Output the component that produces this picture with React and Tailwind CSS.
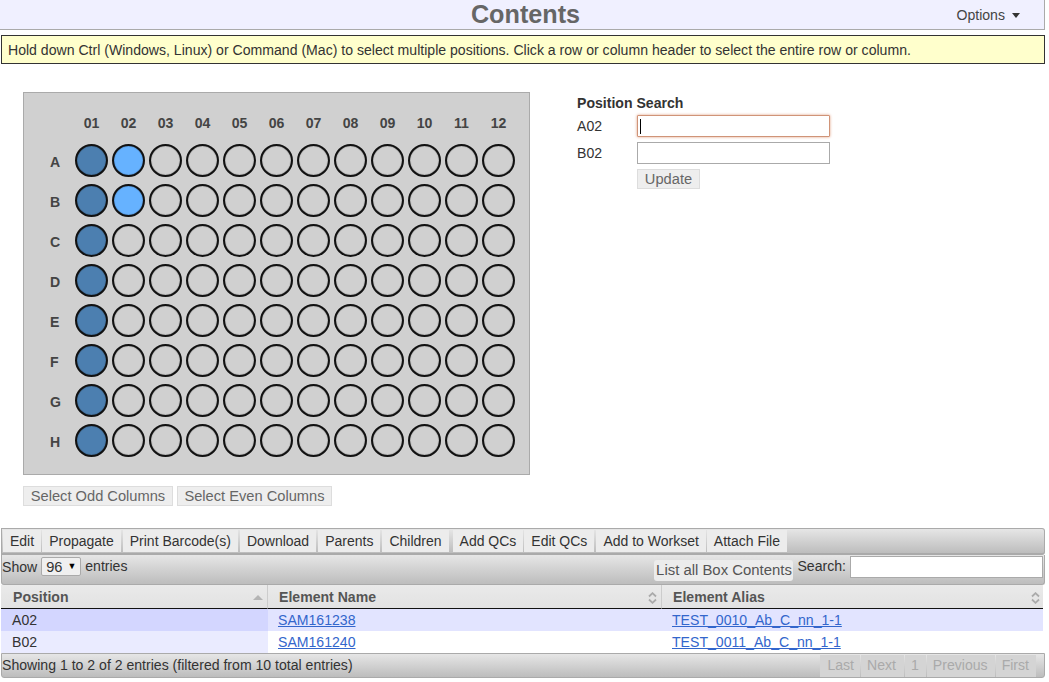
const columns = ["01", "02", "03", "04", "05", "06", "07", "08", "09", "10", "11", "12"];
const rows = ["A", "B", "C", "D", "E", "F", "G", "H"];
const tools = [
  { label: "Edit", cls: "" },
  { label: "Propagate", cls: "mr-[1px]" },
  { label: "Print Barcode(s)", cls: "mr-[1px]" },
  { label: "Download", cls: "mr-[1px]" },
  { label: "Parents", cls: "mr-[1px]" },
  { label: "Children", cls: "mr-[3px]" },
  { label: "Add QCs", cls: "" },
  { label: "Edit QCs", cls: "mr-[1px]" },
  { label: "Add to Workset", cls: "" },
  { label: "Attach File", cls: "" },
];
const pages = [
  { label: "Last", cls: "pl-[7px] pr-[6px]" },
  { label: "Next", cls: "pl-[6px] pr-[8px]" },
  { label: "1", cls: "pl-[6px] pr-[7px]" },
  { label: "Previous", cls: "pl-[6px] pr-[7px]" },
  { label: "First", cls: "pl-[6px] pr-[7px]" },
];

function Well({ row, col }) {
  const full = col === "01";
  const picked = col === "02" && (row === "A" || row === "B");
  return (
    <div className="h-10 flex items-center justify-center">
      <div
        className={
          "w-[33px] h-[33px] rounded-full border-2 border-[#111] shadow-[inset_0_0_1px_#111] " +
          (full ? "bg-[#4c7fb0]" : picked ? "bg-[#66b2ff]" : "bg-[#d0d0d0]")
        }
      />
    </div>
  );
}

function SortArrows({ only }) {
  if (only) {
    return <span className="ml-auto w-0 h-0 border-x-[5px] border-x-transparent border-b-[5px] border-b-[#b4b4b4]" />;
  }
  return (
    <svg width="9" height="12" viewBox="0 0 9 12" fill="none" stroke="#aaa" strokeWidth="1.8" className="ml-auto">
      <path d="M1 4.5 L4.5 1.2 L8 4.5" />
      <path d="M1 7.5 L4.5 10.8 L8 7.5" />
    </svg>
  );
}

export default function App() {
  return (
    <div className="w-[1049px] h-[682px] overflow-hidden bg-white text-[14.08px] text-[#333] font-['Liberation_Sans',Arial,sans-serif]">
      {/* Title bar */}
      <div className="w-[1045px] h-[30px] bg-[#f0f0ff] border-b border-r border-[#aaa] flex items-center relative pl-[7px]">
        <h1 className="w-full text-center text-[25.2px] font-bold text-[#666] leading-[29px]">Contents</h1>
        <div className="absolute right-[24px] top-[5px] flex items-center gap-[7px] text-[14.08px] text-[#444]">
          Options
          <span className="w-0 h-0 border-x-[4.5px] border-x-transparent border-t-[5px] border-t-[#333]" />
        </div>
      </div>

      {/* Notice */}
      <div className="ml-[1px] mt-[5px] w-[1044px] h-[29px] bg-[#ffffcc] border border-[#333] flex items-center pl-[6px] pt-[3px]">
        Hold down Ctrl (Windows, Linux) or Command (Mac) to select multiple positions. Click a row or column header to select the entire row or column.
      </div>

      <div className="flex ml-[23px] mt-[28px]">
        {/* Plate */}
        <div>
          <div className="w-[507px] h-[383px] bg-[#d0d0d0] border border-[#aaa] pt-[19px] pl-[14px]">
            <div className="grid grid-cols-[35px_repeat(12,37px)]">
              <div className="h-[22px]" />
              {columns.map((c) => (
                <div key={c} className="h-[22px] flex items-center justify-center pt-[2px] font-bold text-[#444]">
                  {c}
                </div>
              ))}
              <div className="col-span-13 h-[6px]" />
              {rows.map((r) => (
                <div key={r} className="contents">
                  <div className="h-10 flex items-center justify-start pl-[12px] pt-[6px] font-bold text-[#444]">{r}</div>
                  {columns.map((c) => (
                    <Well key={c} row={r} col={c} />
                  ))}
                </div>
              ))}
            </div>
          </div>
          <div className="flex gap-[4px] mt-[11px]">
            <button className="h-5 w-[150px] bg-[#eee] border border-[#ddd] text-[14.67px] leading-none text-[#666]">Select Odd Columns</button>
            <button className="h-5 w-[155px] bg-[#eee] border border-[#ddd] text-[14.67px] leading-none text-[#666]">Select Even Columns</button>
          </div>
        </div>

        {/* Position search */}
        <div className="ml-[47px] w-[260px] pt-[2px]">
          <div className="font-bold leading-[18px]">Position Search</div>
          <div className="flex items-center mt-[3px]">
            <span className="w-[60px] leading-[18px]">A02</span>
            <div className="w-[193px] h-[22px] bg-white border border-[#d09478] rounded-[1px] shadow-[0_0_3px_#e0a080] flex items-center pl-[2px]">
              <span className="w-px h-[15px] bg-black" />
            </div>
          </div>
          <div className="flex items-center mt-[5px]">
            <span className="w-[60px] leading-[18px]">B02</span>
            <div className="w-[193px] h-[22px] bg-white border border-[#aaa]" />
          </div>
          <button className="block ml-[60px] mt-[5px] h-5 w-[63px] pt-[1px] bg-[#eee] border border-[#ddd] text-[14.67px] leading-none text-[#666]">Update</button>
        </div>
      </div>

      {/* Toolbar */}
      <div className="ml-[1px] mt-[22px] w-[1044px] h-[27px] flex items-stretch gap-[1px] pl-[1px] py-[1px] border border-[#aaa] border-b-[2px] rounded-r-[3px] bg-gradient-to-b from-[#e6e6e6] to-[#bdbdbd]">
        {tools.map((t) => (
          <button key={t.label} className={"px-[7px] bg-[#ececec] text-[14px] text-[#333] leading-none " + t.cls}>{t.label}</button>
        ))}
      </div>

      {/* Table */}
      <div className="ml-[1px] w-[1044px]">
        <div className="h-[30px] flex items-start border border-[#aaa] border-t-0 rounded-b-[3px] bg-gradient-to-b from-[#e6e6e6] to-[#bdbdbd] pr-[1px]">
          <span className="mt-[2px] leading-[20px]">Show</span>
          <div className="ml-[4px] mt-[2px] w-[40px] h-[19px] bg-[#f0f0f0] border border-[#aaa] rounded-[2px] flex items-center pl-[4px] gap-[5px] text-[14.67px]">
            96 <span className="text-[9px] text-black">▼</span>
          </div>
          <span className="ml-[4px] mt-[1px] leading-[20px]">entries</span>
          <div className="ml-auto flex items-start">
            <button className="mt-[5px] h-[21px] w-[139px] bg-[#ececec] rounded-[3px] text-[14.9px] text-[#555] leading-none">List all Box Contents</button>
            <span className="ml-[4px] mt-[1px] leading-[20px]">Search:</span>
            <div className="ml-[4px] mt-[1px] w-[193px] h-[22px] bg-white border border-[#aaa]" />
          </div>
        </div>

        <div className="grid grid-cols-[267px_394px_381px] w-[1042px]">
          <div className="h-[24px] flex items-center pl-[12px] pr-[4px] pt-[2px] bg-gradient-to-b from-[#eaeaea] to-[#e2e2e2] border-b border-[#111] border-r border-r-[#ccc] font-bold text-[#555]">
            Position <SortArrows only />
          </div>
          <div className="h-[24px] flex items-center pl-[11px] pr-[4px] pt-[2px] bg-gradient-to-b from-[#eaeaea] to-[#e2e2e2] border-b border-[#111] border-r border-r-[#ccc] font-bold text-[#555]">
            Element Name <SortArrows />
          </div>
          <div className="h-[24px] flex items-center pl-[11px] pr-[3px] pt-[2px] bg-gradient-to-b from-[#eaeaea] to-[#e2e2e2] border-b border-[#111] font-bold text-[#555]">
            Element Alias <SortArrows />
          </div>

          <div className="h-[22px] flex items-center pl-[11px] pt-[2px] bg-[#d3d6ff]">A02</div>
          <div className="h-[22px] flex items-center pl-[10px] pt-[2px] bg-[#e2e4ff]">
            <a href="#" className="text-[#3366cc] underline">SAM161238</a>
          </div>
          <div className="h-[22px] flex items-center pl-[10px] pt-[2px] bg-[#e2e4ff]">
            <a href="#" className="text-[#3366cc] underline">TEST_0010_Ab_C_nn_1-1</a>
          </div>

          <div className="h-[22px] flex items-center pl-[11px] pt-[2px] bg-[#eaebff]">B02</div>
          <div className="h-[22px] flex items-center pl-[10px] pt-[2px] bg-white">
            <a href="#" className="text-[#3366cc] underline">SAM161240</a>
          </div>
          <div className="h-[22px] flex items-center pl-[10px] pt-[2px] bg-white">
            <a href="#" className="text-[#3366cc] underline">TEST_0011_Ab_C_nn_1-1</a>
          </div>
        </div>

        <div className="h-[25px] flex items-center border border-[#aaa] rounded-b-[3px] bg-gradient-to-b from-[#e6e6e6] to-[#bdbdbd] pr-[8px]">
          <span>Showing 1 to 2 of 2 entries (filtered from 10 total entries)</span>
          <div className="ml-auto flex h-[22px] gap-[1px]">
            {pages.map((p) => (
              <span key={p.label} className={"flex items-center bg-[#d4d4d4] text-[#aaa] " + p.cls}>{p.label}</span>
            ))}
          </div>
        </div>
      </div>
    </div>
  );
}
